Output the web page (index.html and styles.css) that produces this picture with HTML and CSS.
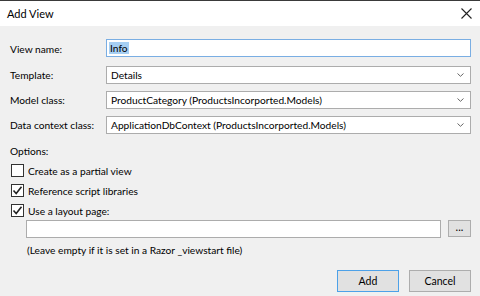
FILE: index.html
```html
<!DOCTYPE html>
<html lang="en">
<head>
  <meta charset="UTF-8" />
  <title>Add View</title>
  <link rel="stylesheet" href="styles.css">
</head>
<body>
  <div class="window">
    <div class="titlebar">
      <span class="title">Add View</span>
      <svg class="close" width="11" height="11" viewBox="0 0 11 11">
        <path d="M0.5 0.5 L10.5 10.5 M10.5 0.5 L0.5 10.5" stroke="#222" stroke-width="1.1" fill="none"/>
      </svg>
    </div>
    <div class="content">
      <div class="form">
        <label class="label">View name:</label>
        <div class="input focused"><span class="selected">Info</span></div>

        <label class="label">Template:</label>
        <div class="select">
          <span>Details</span>
          <svg class="chevron" width="7" height="4" viewBox="0 0 7 4"><path d="M0.5 0.5 L3.5 3.3 L6.5 0.5" stroke="#666" fill="none"/></svg>
        </div>

        <label class="label">Model class:</label>
        <div class="select">
          <span>ProductCategory (ProductsIncorported.Models)</span>
          <svg class="chevron" width="7" height="4" viewBox="0 0 7 4"><path d="M0.5 0.5 L3.5 3.3 L6.5 0.5" stroke="#666" fill="none"/></svg>
        </div>

        <label class="label">Data context class:</label>
        <div class="select">
          <span>ApplicationDbContext (ProductsIncorported.Models)</span>
          <svg class="chevron" width="7" height="4" viewBox="0 0 7 4"><path d="M0.5 0.5 L3.5 3.3 L6.5 0.5" stroke="#666" fill="none"/></svg>
        </div>
      </div>

      <div class="options-title">Options:</div>
      <div class="check-row">
        <span class="checkbox"></span>
        <span>Create as a partial view</span>
      </div>
      <div class="check-row">
        <span class="checkbox"><svg width="11" height="11" viewBox="0 0 11 11"><path d="M1.5 5.5 L4.2 8.5 L9.5 1.8" stroke="#222" stroke-width="1.6" fill="none"/></svg></span>
        <span>Reference script libraries</span>
      </div>
      <div class="check-row">
        <span class="checkbox"><svg width="11" height="11" viewBox="0 0 11 11"><path d="M1.5 5.5 L4.2 8.5 L9.5 1.8" stroke="#222" stroke-width="1.6" fill="none"/></svg></span>
        <span>Use a layout page:</span>
      </div>
      <div class="layout-row">
        <div class="input layout-input"></div>
        <button class="browse">...</button>
      </div>
      <div class="hint">(Leave empty if it is set in a Razor _viewstart file)</div>

      <div class="actions">
        <button class="btn default">Add</button>
        <button class="btn">Cancel</button>
      </div>
    </div>
  </div>
</body>
</html>
```

FILE: styles.css
```css
* {
  box-sizing: border-box;
}
body {
  margin: 0;
  font-family: Lato, 'Noto Sans', sans-serif;
  font-size: 10.2px;
  color: #000;
  background: #f0f0f0;
}
.window {
  width: 480px;
  height: 296px;
  display: flex;
  flex-direction: column;
  border-top: 1px solid #3a3a3a;
  background: #f0f0f0;
  overflow: hidden;
}
.titlebar {
  flex: none;
  height: 25px;
  background: #fff;
  display: flex;
  align-items: center;
  justify-content: space-between;
  padding: 0 7px 0 7px;
}
.title {
  font-size: 11px;
}
.close {
  margin-right: 1px;
}
.content {
  flex: 1;
  padding: 13px 9px 0 10px;
  display: flex;
  flex-direction: column;
}
.form {
  display: grid;
  grid-template-columns: 96px 1fr;
  row-gap: 7px;
  align-items: center;
}
.label {
  white-space: nowrap;
}
.form .input {
  margin-bottom: 2px;
}
.input,
.select {
  height: 18px;
  background: #fff;
  border: 1px solid #acacac;
  display: flex;
  align-items: center;
  padding: 0 2px;
  line-height: 16px;
  white-space: nowrap;
}
.input.focused {
  border-color: #7aaee3;
}
.selected {
  background: #a6cff3;
  padding: 0 1px;
  line-height: 12px;
}
.select {
  justify-content: space-between;
  padding: 0 6px 0 4px;
}
.chevron {
  flex: none;
}
.options-title {
  margin-top: 10px;
  height: 15px;
  line-height: 15px;
}
.check-row {
  display: flex;
  align-items: center;
  gap: 4px;
  height: 13px;
  margin-top: 5px;
  margin-left: 1px;
}
.check-row + .check-row {
  margin-top: 7px;
}
.checkbox {
  flex: none;
  width: 13px;
  height: 13px;
  border: 1px solid #333;
  background: #fff;
  display: flex;
  align-items: center;
  justify-content: center;
}
.layout-row {
  display: flex;
  align-items: flex-start;
  margin-top: 3px;
  padding-left: 16px;
  gap: 7px;
}
.layout-input {
  flex: 1;
}
.browse {
  width: 23px;
  height: 17px;
  padding: 0 0 3px 0;
  font-family: inherit;
  font-size: 11px;
  line-height: 10px;
  background: #e1e1e1;
  border: 1px solid #adadad;
}
.hint {
  margin-top: 5px;
  padding-left: 17px;
  line-height: 15px;
}
.actions {
  display: flex;
  justify-content: flex-end;
  gap: 10px;
  margin-top: 12px;
}
.btn {
  width: 62px;
  height: 22px;
  font-family: inherit;
  font-size: 10.5px;
  background: #e1e1e1;
  border: 1px solid #adadad;
  padding: 0;
}
.btn.default {
  border-color: #4da1e8;
}
```
